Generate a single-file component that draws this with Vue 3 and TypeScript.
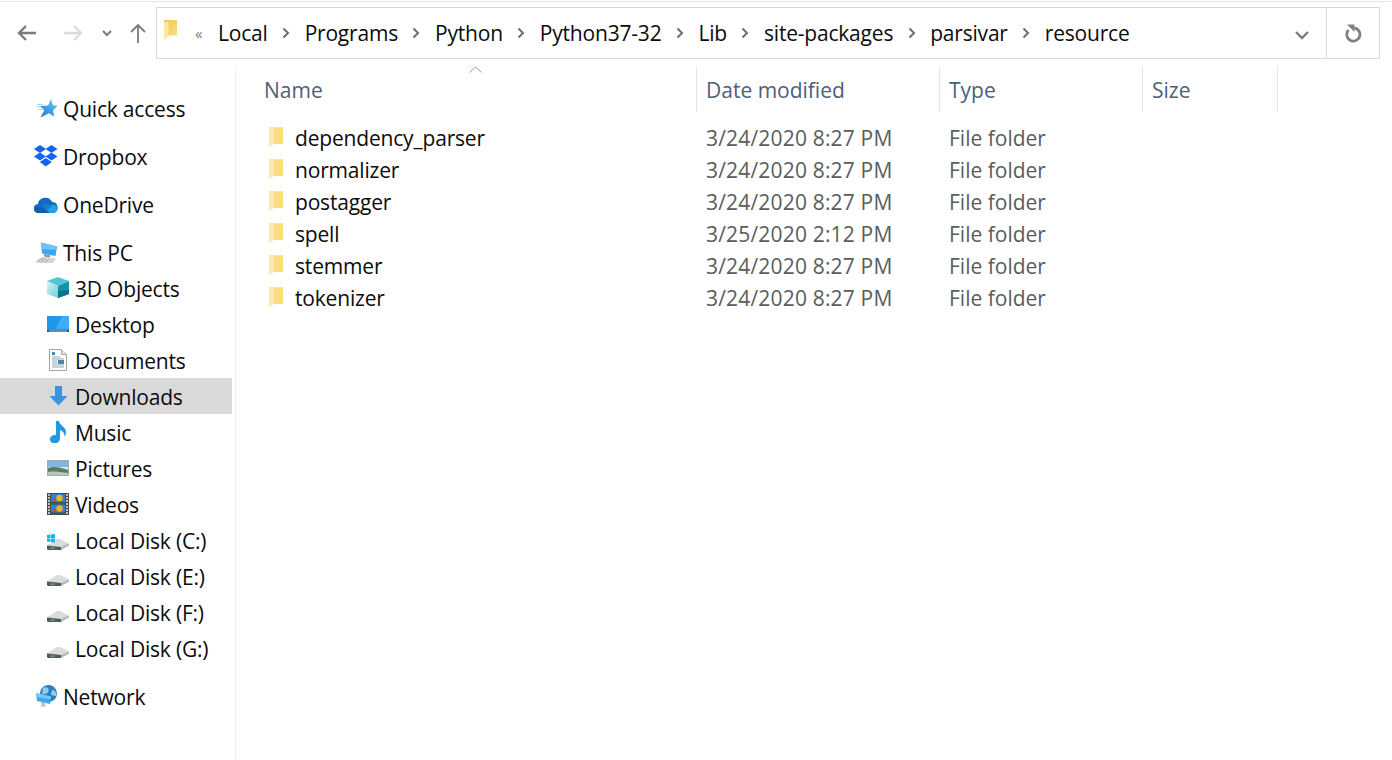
<script setup lang="ts">
const crumbs: string[] = ['Local', 'Programs', 'Python', 'Python37-32', 'Lib', 'site-packages', 'parsivar', 'resource']

interface NavItem { label: string; icon: string; child: boolean; active?: boolean }
const groups: NavItem[][] = [
  [{ label: 'Quick access', icon: 'star', child: false }],
  [{ label: 'Dropbox', icon: 'dropbox', child: false }],
  [{ label: 'OneDrive', icon: 'onedrive', child: false }],
  [
    { label: 'This PC', icon: 'pc', child: false },
    { label: '3D Objects', icon: 'cube', child: true },
    { label: 'Desktop', icon: 'desktop', child: true },
    { label: 'Documents', icon: 'docs', child: true },
    { label: 'Downloads', icon: 'down', child: true, active: true },
    { label: 'Music', icon: 'music', child: true },
    { label: 'Pictures', icon: 'pics', child: true },
    { label: 'Videos', icon: 'videos', child: true },
    { label: 'Local Disk (C:)', icon: 'diskc', child: true },
    { label: 'Local Disk (E:)', icon: 'disk', child: true },
    { label: 'Local Disk (F:)', icon: 'disk', child: true },
    { label: 'Local Disk (G:)', icon: 'disk', child: true },
  ],
  [{ label: 'Network', icon: 'net', child: false }],
]

const files = [
  { name: 'dependency_parser', date: '3/24/2020 8:27 PM' },
  { name: 'normalizer', date: '3/24/2020 8:27 PM' },
  { name: 'postagger', date: '3/24/2020 8:27 PM' },
  { name: 'spell', date: '3/25/2020 2:12 PM' },
  { name: 'stemmer', date: '3/24/2020 8:27 PM' },
  { name: 'tokenizer', date: '3/24/2020 8:27 PM' },
]
</script>

<template>
  <div class="win">
    <div class="topline"></div>
    <header class="toolbar">
      <div class="navbtns">
        <svg class="nav back" width="22" height="18" viewBox="0 0 22 18"><path d="M20 9H3M10 2 3 9l7 7" fill="none" stroke="#7a7a7a" stroke-width="2.4"/></svg>
        <svg class="nav fwd" width="22" height="18" viewBox="0 0 22 18"><path d="M2 9h17M12 2l7 7-7 7" fill="none" stroke="#dcdcdc" stroke-width="2.4"/></svg>
        <svg class="nav drop" width="10" height="7" viewBox="0 0 10 7"><path d="M1 1l4 4 4-4" fill="none" stroke="#7a7a7a" stroke-width="2"/></svg>
        <svg class="nav up" width="16" height="20" viewBox="0 0 16 20"><path d="M8 20V2M1 9l7-7 7 7" fill="none" stroke="#7a7a7a" stroke-width="1.8"/></svg>
      </div>
      <div class="address">
        <svg class="addr-folder" width="15" height="22" viewBox="0 0 15 22">
          <defs><linearGradient id="fg0" x1="0" x2="1" y1="0" y2="1"><stop offset="0" stop-color="#f3c548"/><stop offset="1" stop-color="#fce08c"/></linearGradient></defs>
          <path d="M1 1h13v15.500H6L1 21z" fill="url(#fg0)"/>
          <path d="M1 3h4.500v13.500L1 21z" fill="#fde7a6"/>
        </svg>
        <span class="overflow">«</span>
        <div class="crumbs">
          <template v-for="(c, i) in crumbs" :key="c">
            <span class="crumb">{{ c }}</span>
            <svg v-if="i < crumbs.length - 1" class="sep" width="8" height="12" viewBox="0 0 8 12"><path d="M1.500 1.500 6 6l-4.500 4.500" fill="none" stroke="#6e6e6e" stroke-width="2"/></svg>
          </template>
        </div>
        <svg class="addr-drop" width="16" height="10" viewBox="0 0 16 10"><path d="M2 2l6 6 6-6" fill="none" stroke="#7a7a7a" stroke-width="2.400"/></svg>
        <div class="refresh">
          <svg width="18" height="20" viewBox="0 0 18 20">
            <path d="M10.500 5A6.600 6.600 0 1 1 4.500 7" fill="none" stroke="#808080" stroke-width="2.800"/>
            <path d="M3 1.500h7.500V9z" fill="#808080"/>
          </svg>
        </div>
      </div>
    </header>

    <div class="body">
      <aside class="nav-pane">
        <div v-for="(g, gi) in groups" :key="gi" class="group">
          <div v-for="item in g" :key="item.label" class="nav-row" :class="{ child: item.child, active: item.active }">
            <span class="ico">
              <svg v-if="item.icon === 'star'" width="24" height="24" viewBox="0 0 24 24">
                <defs><linearGradient id="st" x1="1" x2="0" y1="0" y2="1"><stop offset="0" stop-color="#6fd0fa"/><stop offset="1" stop-color="#1577d6"/></linearGradient></defs>
                <path d="M3 7.500h6M2.500 10h5M4 12.500h5" stroke="#a8d8f5" stroke-width="1.100"/>
                <path d="M17 2l1.800 6.300 4.900.5-4.600 4.600 1 6-5.200-3.200-8.500 4.200 3.900-7.200-4.100-4.200 8-.5z" fill="url(#st)"/>
              </svg>
              <svg v-else-if="item.icon === 'dropbox'" width="24" height="24" viewBox="0 0 24 24">
                <path d="M6 0l6 4-6 4-6-4zM17.500 0l6 4-6 4-6-4zM6 7.500l6 4-6 4-6-4zM17.500 7.500l6 4-6 4-6-4zM11.800 13l6 4-6 4.500-6-4.500z" fill="#1265f0"/>
              </svg>
              <svg v-else-if="item.icon === 'onedrive'" width="24" height="24" viewBox="0 0 24 24">
                <path d="M4.500 20a4.500 4.500 0 0 1-.6-9a7.500 7.500 0 0 1 14.200-2a5.600 5.600 0 0 1 1.400 11z" fill="#0f6cc2"/>
                <path d="M10 20l9-8.500a4.600 4.600 0 0 1 4 4.300c0 2.400-2 4.200-4 4.200z" fill="#22a0e6"/>
                <path d="M4.500 20a4.300 4.300 0 0 1-3.500-6.500l8 1.700 7 4.800z" fill="#0e60ae"/>
                <path d="M8 11.500l11 0-7 6z" fill="#1480d2"/>
              </svg>
              <svg v-else-if="item.icon === 'pc'" width="24" height="24" viewBox="0 0 24 24">
                <path d="M7 1.500l16 4-1.500 9.500L8 12.500z" fill="#3ba6ee"/>
                <path d="M7 1.500l16 4-.7 3.500L7.500 8z" fill="#6cc5f6"/>
                <path d="M10 13l6 1.200v2.300l-6-1z" fill="#8b949b"/>
                <path d="M1 20.500l7-4.500 14 1-3 5H3z" fill="#d3d7da"/>
                <path d="M4 20l5-3M7 21l5-3.500M11 21.500l4-3.500" stroke="#a0a6ab" stroke-width=".9"/>
              </svg>
              <svg v-else-if="item.icon === 'cube'" width="24" height="24" viewBox="0 0 24 24">
                <defs><linearGradient id="cb" x1="0" x2="1" y1="0" y2="1"><stop offset="0" stop-color="#d3f2f5"/><stop offset="1" stop-color="#6fd0da"/></linearGradient></defs>
                <path d="M12 0l11 4-11 5L1 4z" fill="#55c5d6"/>
                <path d="M1 4l11 5v12L1 17z" fill="url(#cb)"/>
                <path d="M23 4l-11 5v12l11-4z" fill="#1592ab"/>
                <path d="M12 14l11-1v4l-11 4z" fill="#0b7288"/>
              </svg>
              <svg v-else-if="item.icon === 'desktop'" width="24" height="24" viewBox="0 0 24 24">
                <rect x="1" y="3" width="22" height="16" fill="#1e96ea"/>
                <path d="M16 3h7v13H10z" fill="#3eaef2"/>
                <rect x="1" y="17" width="22" height="2" fill="#0f5f9e"/>
                <rect x="3" y="17.600" width="18" height=".8" fill="#bcdff5"/>
              </svg>
              <svg v-else-if="item.icon === 'docs'" width="24" height="24" viewBox="0 0 24 24">
                <path d="M3.500 .5h12l5 5v16h-17z" fill="#fff" stroke="#a5a5a5"/>
                <path d="M15.500 .5v5h5" fill="#e6e6e6" stroke="#a5a5a5"/>
                <path d="M6 8h8M6 10h12M6 12h5M6 14h5M6 16h12M6 18h12" stroke="#8fa9bf" stroke-width="1"/>
                <rect x="12" y="11" width="6" height="4" fill="#4f86a8"/>
                <path d="M6 3h3v3H6z" fill="#3a8fd8"/>
              </svg>
              <svg v-else-if="item.icon === 'down'" width="24" height="24" viewBox="0 0 24 24">
                <path d="M9 1h7v10h5.500L12.500 20.500 3.500 11H9z" fill="#3d92de"/>
              </svg>
              <svg v-else-if="item.icon === 'music'" width="24" height="24" viewBox="0 0 24 24">
                <path d="M10 0h3c.5 4 7 6 7 11 0 2-.7 3.500-1.500 4.500.2-3.500-2-5.500-4.500-6.500v8.500c0 3-2.500 4.700-5.500 4.700C6 22.200 4 21 4 18.500c0-3 3-4.800 6-4.300z" fill="#1e9ae8"/>
              </svg>
              <svg v-else-if="item.icon === 'pics'" width="24" height="24" viewBox="0 0 24 24">
                <rect x="1" y="3" width="22" height="16" fill="#a9a9a9"/>
                <rect x="2" y="4" width="20" height="14" fill="#cfe6f5"/>
                <rect x="2" y="4" width="20" height="6" fill="#7fb5e0"/>
                <path d="M2 11c6-2 11-1 20 2v5H2z" fill="#5a7a62"/>
                <path d="M2 15c6-1 12 0 20 1v2H2z" fill="#b4c8bb"/>
              </svg>
              <svg v-else-if="item.icon === 'videos'" width="24" height="24" viewBox="0 0 24 24">
                <rect x="1" y="0" width="22" height="22" fill="#4a4a4a"/>
                <rect x="5" y="1" width="14" height="9.500" fill="#2f7fd6"/>
                <rect x="5" y="11.500" width="14" height="9.500" fill="#2f7fd6"/>
                <circle cx="13.500" cy="5" r="3.200" fill="#e8b62a"/><circle cx="8.500" cy="7" r="1.800" fill="#c9472b"/>
                <path d="M5 9h14v1.500H5z" fill="#3c5a2e"/>
                <circle cx="13.500" cy="15.500" r="3.200" fill="#e8b62a"/><circle cx="8.500" cy="17.500" r="1.800" fill="#c9472b"/>
                <path d="M5 19.500h14V21H5z" fill="#3c5a2e"/>
                <path d="M2 2h2M2 5h2M2 8h2M2 11h2M2 14h2M2 17h2M2 20h2M20 2h2M20 5h2M20 8h2M20 11h2M20 14h2M20 17h2M20 20h2" stroke="#e5e5e5" stroke-width="1.400"/>
              </svg>
              <svg v-else-if="item.icon === 'diskc' || item.icon === 'disk'" width="24" height="24" viewBox="0 0 24 24">
                <path d="M1 16.500 11 10h3l9 4.500v2L15 21H2l-1-1z" fill="#dadcdd"/>
                <path d="M15 18l8-3.500v2L15 21z" fill="#b4b7b9"/>
                <path d="M1 16.500 15 18v3H2l-1-1z" fill="#56595b"/>
                <path d="M4.500 18.500h4v1.300h-4z" fill="#5ac452"/>
                <template v-if="item.icon === 'diskc'">
                  <path d="M1 6l3.500-.5V9H1zM5 5.400 9 5v4H5zM1 9.500h3.500V13L1 12.500zM5 9.500h4v4L5 13z" fill="#12b4ee"/>
                </template>
              </svg>
              <svg v-else-if="item.icon === 'net'" width="24" height="24" viewBox="0 0 24 24">
                <circle cx="14.500" cy="8.500" r="8.500" fill="#2a7fc2"/>
                <path d="M9 3c4-2 7 1 5 4s-4 1-6 3zM18 5c3-.5 5 3 4 6l-5-1z" fill="#94cdea"/>
                <path d="M2 8l15 3.500-1 7.500L3 16z" fill="#3fa8ee"/>
                <path d="M2 8l15 3.500-.4 2.500L2.500 12z" fill="#7accf7"/>
                <path d="M7 16.500l4 1v3l2 1H6l1.500-1z" fill="#b9bfc4"/>
              </svg>
            </span>
            <span class="label">{{ item.label }}</span>
          </div>
        </div>
      </aside>

      <main class="content">
        <svg class="sort" width="13" height="7" viewBox="0 0 13 7"><path d="M.5 6.500l6-5.500 6 5.500" fill="none" stroke="#9a9a9a" stroke-width="1"/></svg>
        <div class="head">
          <div class="col name">Name</div>
          <div class="col date">Date modified</div>
          <div class="col type">Type</div>
          <div class="col size">Size</div>
        </div>
        <div class="rows">
          <div v-for="f in files" :key="f.name" class="row">
            <div class="fname">
              <svg width="18" height="22" viewBox="0 0 18 22">
                <path d="M2 1.500h14v16H7L2 21z" fill="#f7cd58"/>
                <path d="M8 1.500h8v16H8z" fill="#fbdc7f"/>
                <path d="M2 1.500h5.500v16L2 21z" fill="#fde9ad"/>
              </svg>
              <span>{{ f.name }}</span>
            </div>
            <div class="fdate">{{ f.date }}</div>
            <div class="ftype">File folder</div>
          </div>
        </div>
      </main>
    </div>
  </div>
</template>

<style>
html, body { margin: 0; background: #fff; }
</style>

<style scoped>
.win {
  width: 1392px;
  height: 760px;
  overflow: hidden;
  background: #fff;
  font-family: "Open Sans", "Noto Sans", sans-serif;
  font-size: 21px;
  color: #0c0c0c;
  padding-top: 1px;
  box-sizing: border-box;
  display: flex;
  flex-direction: column;
}
.topline { height: 1px; flex: none; background: #e6e6e6; }
.toolbar {
  height: 64px;
  flex: none;
  display: flex;
  align-items: flex-start;
  padding: 5px 12px 0 0;
  box-sizing: border-box;
}
.navbtns {
  width: 156px;
  height: 52px;
  flex: none;
  display: flex;
  align-items: center;
  padding-left: 16px;
  box-sizing: border-box;
}
.nav { flex: none; }
.fwd { margin-left: 24px; }
.drop { margin-left: 18px; }
.up { margin-left: 18px; }
.address {
  flex: 1;
  height: 52px;
  border: 1px solid #d9d9d9;
  box-sizing: border-box;
  display: flex;
  align-items: center;
  padding-left: 6px;
}
.addr-folder { flex: none; margin-top: -6px; }
.overflow { width: 12px; margin-left: 17px; color: #7a7a7a; font-size: 15px; flex: none; }
.crumbs { display: flex; align-items: center; flex: 1; margin-left: 11px; letter-spacing: -0.2px; }
.crumb { white-space: nowrap; }
.sep { margin: 0 14.5px; flex: none; }
.addr-drop { flex: none; margin: 4px 16px 0 0; }
.refresh {
  width: 52px;
  height: 50px;
  border-left: 1px solid #d9d9d9;
  display: flex;
  align-items: center;
  justify-content: center;
  flex: none;
}
.body { flex: 1; display: flex; min-height: 0; }
.nav-pane {
  width: 236px;
  flex: none;
  border-right: 1px solid #f0f0f0;
  box-sizing: border-box;
  padding: 24px 3px 0 0;
  display: flex;
  flex-direction: column;
  gap: 12px;
  letter-spacing: -0.2px;
}
.nav-row {
  height: 36px;
  box-sizing: border-box;
  padding-top: 2px;
  display: flex;
  align-items: center;
  padding-left: 34px;
}
.nav-row.child { padding-left: 46px; }
.nav-row.active { background: #d9d9d9; }
.ico { width: 24px; height: 24px; flex: none; margin-right: 5px; display: block; }
.ico svg { display: block; }
.label { white-space: nowrap; }
.content { flex: 1; position: relative; min-width: 0; }
.sort { position: absolute; left: 233px; top: 0; }
.head {
  display: flex;
  height: 46px;
  color: #4c607a;
  align-items: center;
}
.col {
  height: 46px;
  line-height: 48px;
  box-sizing: border-box;
  border-right: 1px solid #e5e5e5;
  padding-left: 9px;
}
.col.name { width: 461px; padding-left: 28px; }
.col.date { width: 243px; }
.col.type { width: 203px; }
.col.size { width: 135px; }
.rows { padding-top: 10px; }
.row { display: flex; height: 32px; align-items: center; }
.fname {
  width: 461px;
  padding-left: 31px;
  box-sizing: border-box;
  display: flex;
  align-items: center;
  gap: 10px;
  letter-spacing: -0.18px;
}
.fname svg { flex: none; margin-top: -2px; }
.fdate { width: 243px; padding-left: 9px; box-sizing: border-box; color: #5c5c5c; letter-spacing: 0.18px; }
.ftype { padding-left: 9px; color: #5c5c5c; }
</style>
